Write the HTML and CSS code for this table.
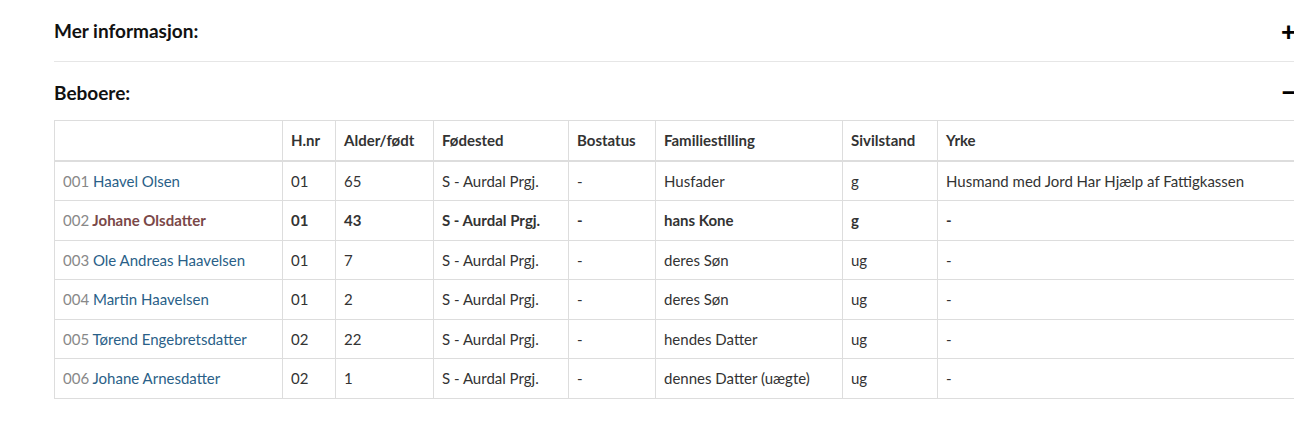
FILE: index.html
```html
<!DOCTYPE html>
<html lang="no">
<head>
<meta charset="utf-8">
<title>Beboere</title>
<link rel="stylesheet" href="styles.css">
</head>
<body>
<div class="page">
  <section class="panel panel-closed">
    <div class="panel-head">
      <h3 class="panel-title">Mer informasjon:</h3>
      <span class="toggle">+</span>
    </div>
  </section>
  <section class="panel panel-open">
    <div class="panel-head">
      <h3 class="panel-title">Beboere:</h3>
      <span class="toggle">&minus;</span>
    </div>
    <table class="residents">
      <colgroup>
        <col class="c-name"><col class="c-hnr"><col class="c-age"><col class="c-place"><col class="c-status"><col class="c-family"><col class="c-civil"><col class="c-job">
      </colgroup>
      <thead>
        <tr><th></th><th>H.nr</th><th>Alder/født</th><th>Fødested</th><th>Bostatus</th><th>Familiestilling</th><th>Sivilstand</th><th>Yrke</th></tr>
      </thead>
      <tbody>
        <tr><td><span class="num">001</span> <a href="#">Haavel Olsen</a></td><td>01</td><td>65</td><td>S - Aurdal Prgj.</td><td>-</td><td>Husfader</td><td>g</td><td>Husmand med Jord Har Hjælp af Fattigkassen</td></tr>
        <tr class="current"><td><span class="num">002</span> <a href="#" class="self">Johane Olsdatter</a></td><td>01</td><td>43</td><td>S - Aurdal Prgj.</td><td>-</td><td>hans Kone</td><td>g</td><td>-</td></tr>
        <tr><td><span class="num">003</span> <a href="#">Ole Andreas Haavelsen</a></td><td>01</td><td>7</td><td>S - Aurdal Prgj.</td><td>-</td><td>deres Søn</td><td>ug</td><td>-</td></tr>
        <tr><td><span class="num">004</span> <a href="#">Martin Haavelsen</a></td><td>01</td><td>2</td><td>S - Aurdal Prgj.</td><td>-</td><td>deres Søn</td><td>ug</td><td>-</td></tr>
        <tr><td><span class="num">005</span> <a href="#">Tørend Engebretsdatter</a></td><td>02</td><td>22</td><td>S - Aurdal Prgj.</td><td>-</td><td>hendes Datter</td><td>ug</td><td>-</td></tr>
        <tr><td><span class="num">006</span> <a href="#">Johane Arnesdatter</a></td><td>02</td><td>1</td><td>S - Aurdal Prgj.</td><td>-</td><td>dennes Datter (uægte)</td><td>ug</td><td>-</td></tr>
      </tbody>
    </table>
  </section>
</div>
</body>
</html>
```
FILE: styles.css
```css
html { overflow: hidden; }
body {
  margin: 0;
  background: #fff;
  font-family: Lato, "Liberation Sans", sans-serif;
  font-size: 15px;
  color: #333;
}
.page {
  width: 1246px;
  padding-left: 54px;
}
.panel-closed {
  border-bottom: 1px solid #e6e6e6;
}
.panel-head {
  display: flex;
  justify-content: space-between;
  align-items: center;
  height: 61px;
}
.panel-open .panel-head {
  height: 58px;
  box-sizing: border-box;
  padding-top: 2px;
}
.panel-title {
  margin: 0;
  font-size: 19px;
  font-weight: 700;
  color: #111;
}
.toggle {
  font-size: 26px;
  font-weight: 900;
  color: #000;
  line-height: 1;
  margin-right: 4px;
}
.residents {
  width: 100%;
  border-collapse: collapse;
  table-layout: fixed;
}
.c-name { width: 228px; }
.c-hnr { width: 53px; }
.c-age { width: 98px; }
.c-place { width: 135px; }
.c-status { width: 87px; }
.c-family { width: 187px; }
.c-civil { width: 95px; }
.residents th,
.residents td {
  border: 1px solid #ddd;
  padding: 8px;
  line-height: 22.5px;
  text-align: left;
  white-space: nowrap;
}
.residents th {
  font-weight: 700;
  color: #333;
  border-bottom-width: 2px;
}
.num { color: #888; }
.residents a {
  color: #2a5f88;
  text-decoration: none;
}
.current td { font-weight: 700; }
.current .num { font-weight: 400; }
.residents a.self { color: #7a4848; }
```
